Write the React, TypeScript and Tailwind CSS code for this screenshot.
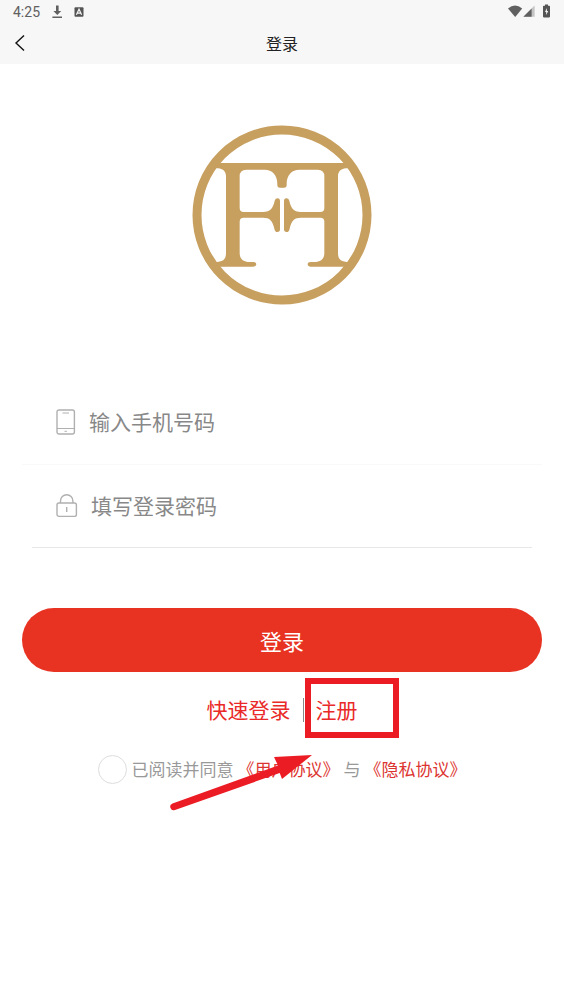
import React, { useState } from "react";

const StatusBar = () => (
  <div className="flex h-6 items-center justify-between pl-[13px] pr-[14px] text-[#606060]">
    <div className="flex items-center gap-[10px]">
      <span className="font-[Roboto,sans-serif] text-sm leading-6">4:25</span>
      <div className="flex items-center gap-1">
        <svg className="h-4 w-4" viewBox="0 0 16 16" fill="currentColor" aria-hidden="true">
          <path d="M6 1.500h2.600V7h2.600L7.300 11 3.400 7H6zM2.400 12.600h9.600V14H2.400z" />
        </svg>
        <svg className="mx-1 h-[10px] w-[10px]" viewBox="0 0 10 10" aria-hidden="true">
          <rect x="0.500" y="0.300" width="9" height="9.400" rx="1" fill="#555" />
          <path d="M2.400 7.800 5 2.200l2.600 5.600M3.500 6.200h3" fill="none" stroke="#f7f7f7" strokeWidth="1.200" />
        </svg>
      </div>
    </div>
    <div className="flex items-center pb-[2px]">
      <svg className="h-3 w-4" viewBox="0 0 16 12" fill="currentColor" aria-hidden="true">
        <path d="M1 3.400Q8-2.400 15.200 3.400L8.200 12z" />
      </svg>
      <svg className="h-3 w-3" viewBox="0 0 12 12" aria-hidden="true">
        <path d="M11.600.6v11.200H.4z" fill="#c4c4c4" />
        <path d="M8.600 3.600v8.200H.4z" fill="#606060" />
      </svg>
      <svg className="ml-2 h-[14px] w-[7px]" viewBox="0 0 7 14" aria-hidden="true">
        <path d="M2 .6h3v1.200h1.200q.8 0 .8.8v10q0 .8-.8.8H.8Q0 13.400 0 12.600v-10q0-.8.8-.8H2z" fill="#555" />
        <path d="M3.900 4 2 8h1.200v3L5.200 7H3.900z" fill="#f7f7f7" />
      </svg>
    </div>
  </div>
);

// one F, the other half of the mark is its mirror image
const halfMark =
  "M105 135H293V209H286Q277 209 278 198C278 170 262 155 240 155H185Q165 155 165 175V270Q165 282 177 282H235C258 282 266 268 270 248Q272 241 279 241Q286 241 286 250V334Q286 342 278 342Q271 342 269 332C264 308 255 299 235 299H177Q165 299 165 311V405C165 425 178 432 195 432H205Q215 432 215 439Q215 446 205 446H100L90 432C115 432 124 425 124 405V175C124 158 113 150 92 150Z";

const Logo = () => (
  <svg className="h-[180px] w-[180px]" viewBox="22 21 540 540" role="img" aria-label="FF" fill="#c79f5f">
    <circle cx="292" cy="291" r="255" fill="none" stroke="#c79f5f" strokeWidth="27" />
    <path d={halfMark} />
    <path d={halfMark} transform="translate(584 0) scale(-1 1)" />
  </svg>
);

const PhoneIcon = () => (
  <svg className="h-[26px] w-5 shrink-0" viewBox="0 0 20 26" fill="none" stroke="#b0b0b0" aria-hidden="true">
    <rect x="1" y="1" width="17.400" height="24" rx="2" strokeWidth="1.400" />
    <path d="M1 19.500h17.400M6.500 4h6.500M8.500 22.300h2.400" />
  </svg>
);

const LockIcon = () => (
  <svg className="h-6 w-[22px] shrink-0" viewBox="0 0 22 24" fill="none" stroke="#b0b0b0" strokeWidth="1.400" aria-hidden="true">
    <rect x="1" y="9" width="19.400" height="13.400" rx="2" />
    <path d="M4.500 9V7a6.200 6.200 0 0 1 12.400 0V9M10.700 13v5" />
  </svg>
);

const App = () => {
  const [agreed, setAgreed] = useState(false);

  return (
    <div className="min-h-screen bg-white font-['Noto_Sans_CJK_SC',sans-serif]">
      <header className="bg-[#f7f7f7]">
        <StatusBar />
        <div className="grid h-10 grid-cols-[1fr_auto_1fr] items-center px-3 pb-[2px]">
          <button type="button" aria-label="返回" className="flex h-9 w-8 items-center">
            <svg className="h-[18px] w-4" viewBox="0 0 16 18" fill="none" stroke="#111" strokeWidth="1.400" aria-hidden="true">
              <path d="M12 1.500 4 9l8 7.500" />
            </svg>
          </button>
          <h1 className="text-base leading-5 text-[#222]">登录</h1>
        </div>
      </header>

      <main className="px-[22px] pt-[61px]">
        <div className="flex justify-center">
          <Logo />
        </div>

        <form onSubmit={(e) => e.preventDefault()}>
          <label className="mt-[75px] flex h-[85px] items-center gap-[13px] border-b border-[#f9f9f9] px-[34px]">
            <PhoneIcon />
            <input
              type="tel"
              placeholder="输入手机号码"
              aria-label="手机号码"
              className="w-full min-w-0 text-[21px] outline-none placeholder:text-[#888]"
            />
          </label>
          <label className="mx-[10px] flex h-[83px] items-center gap-[13px] border-b border-[#e8e8e8] px-6">
            <LockIcon />
            <input
              type="password"
              placeholder="填写登录密码"
              aria-label="登录密码"
              className="w-full min-w-0 text-[21px] outline-none placeholder:text-[#888]"
            />
          </label>

          <button type="submit" className="mt-[60px] h-16 w-full rounded-full bg-[#e83323] text-[22px] text-white">
            登录
          </button>

          <div className="mt-[19px] flex h-[38px] items-center justify-center gap-3 text-[21px] text-[#e92a28]">
            <a href="#quick">快速登录</a>
            <span className="h-6 w-px bg-[#888]" />
            <div className="relative">
              <a href="#register">注册</a>
              <div className="pointer-events-none absolute -left-[11px] -top-4 h-[60px] w-[94px] border-6 border-[#ec1c24]" />
            </div>
          </div>

          <div className="relative mt-5 flex h-10 items-center justify-center gap-[5px] text-[17px] text-[#999]">
            <input
              id="agree"
              type="checkbox"
              checked={agreed}
              onChange={(e) => setAgreed(e.target.checked)}
              className="h-[29px] w-[29px] appearance-none rounded-full border border-[#ddd] checked:border-[#e83323] checked:bg-[#e83323]"
            />
            <div className="flex gap-1 whitespace-nowrap">
              <label htmlFor="agree">已阅读并同意</label>
              <a href="#terms" className="text-[#dc3430]">《用户协议》</a>
              <span>与</span>
              <a href="#privacy" className="text-[#dc3430]">《隐私协议》</a>
            </div>
            <svg
              className="pointer-events-none absolute left-1/2 top-0 -ml-[112px] h-[64px] w-[144px]"
              viewBox="0 0 144 64"
              fill="#ec1c24"
              aria-hidden="true"
            >
              <path d="M2.500 54.500 108 16.500 104 8 142 6 112 30 109.700 24 5 61A3.400 3.400 0 0 1 2.500 54.500z" />
            </svg>
          </div>
        </form>
      </main>
    </div>
  );
};

export default App;
